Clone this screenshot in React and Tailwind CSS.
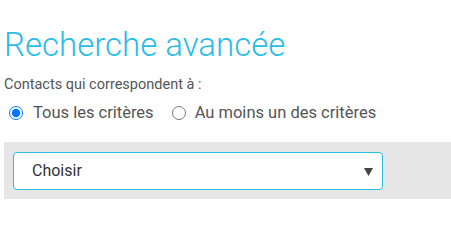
import React from 'react';

export default function App() {
  return (
    <div className="w-[451px] h-[243px] bg-white font-['Roboto',sans-serif]">
      <div className="pt-[26px] pl-[4px]">
        <h1 className="text-[33px] leading-[38px] font-light text-[#29bde6]">Recherche avancée</h1>
        <p className="mt-[12px] text-[14.5px] leading-[18px] text-[#555]">Contacts qui correspondent à :</p>
        <div className="mt-[7px] flex items-center text-[16.5px] leading-[24px] text-[#555]">
          <label className="flex items-center ml-[5px]">
            <input type="radio" name="m" defaultChecked className="w-[14px] h-[14px] m-0 mr-[10px] accent-[#0075ff]" />
            Tous les critères
          </label>
          <label className="flex items-center ml-[18px]">
            <input type="radio" name="m" className="w-[14px] h-[14px] m-0 mr-[9px]" />
            Au moins un des critères
          </label>
        </div>
        <div className="mt-[17px] h-[57px] bg-[#e6e6e6] flex items-center pl-[9px]">
          <div className="relative w-[370px] h-[38px] bg-white border border-[#29bde6] rounded-[4px] flex items-center pl-[18px]">
            <span className="text-[16px] text-[#333]">Choisir</span>
            <svg className="absolute right-[9px] top-[15px]" width="9" height="8" viewBox="0 0 9 8">
              <path d="M0 0 H9 L4.5 8 Z" fill="#444" />
            </svg>
          </div>
        </div>
      </div>
    </div>
  );
}
